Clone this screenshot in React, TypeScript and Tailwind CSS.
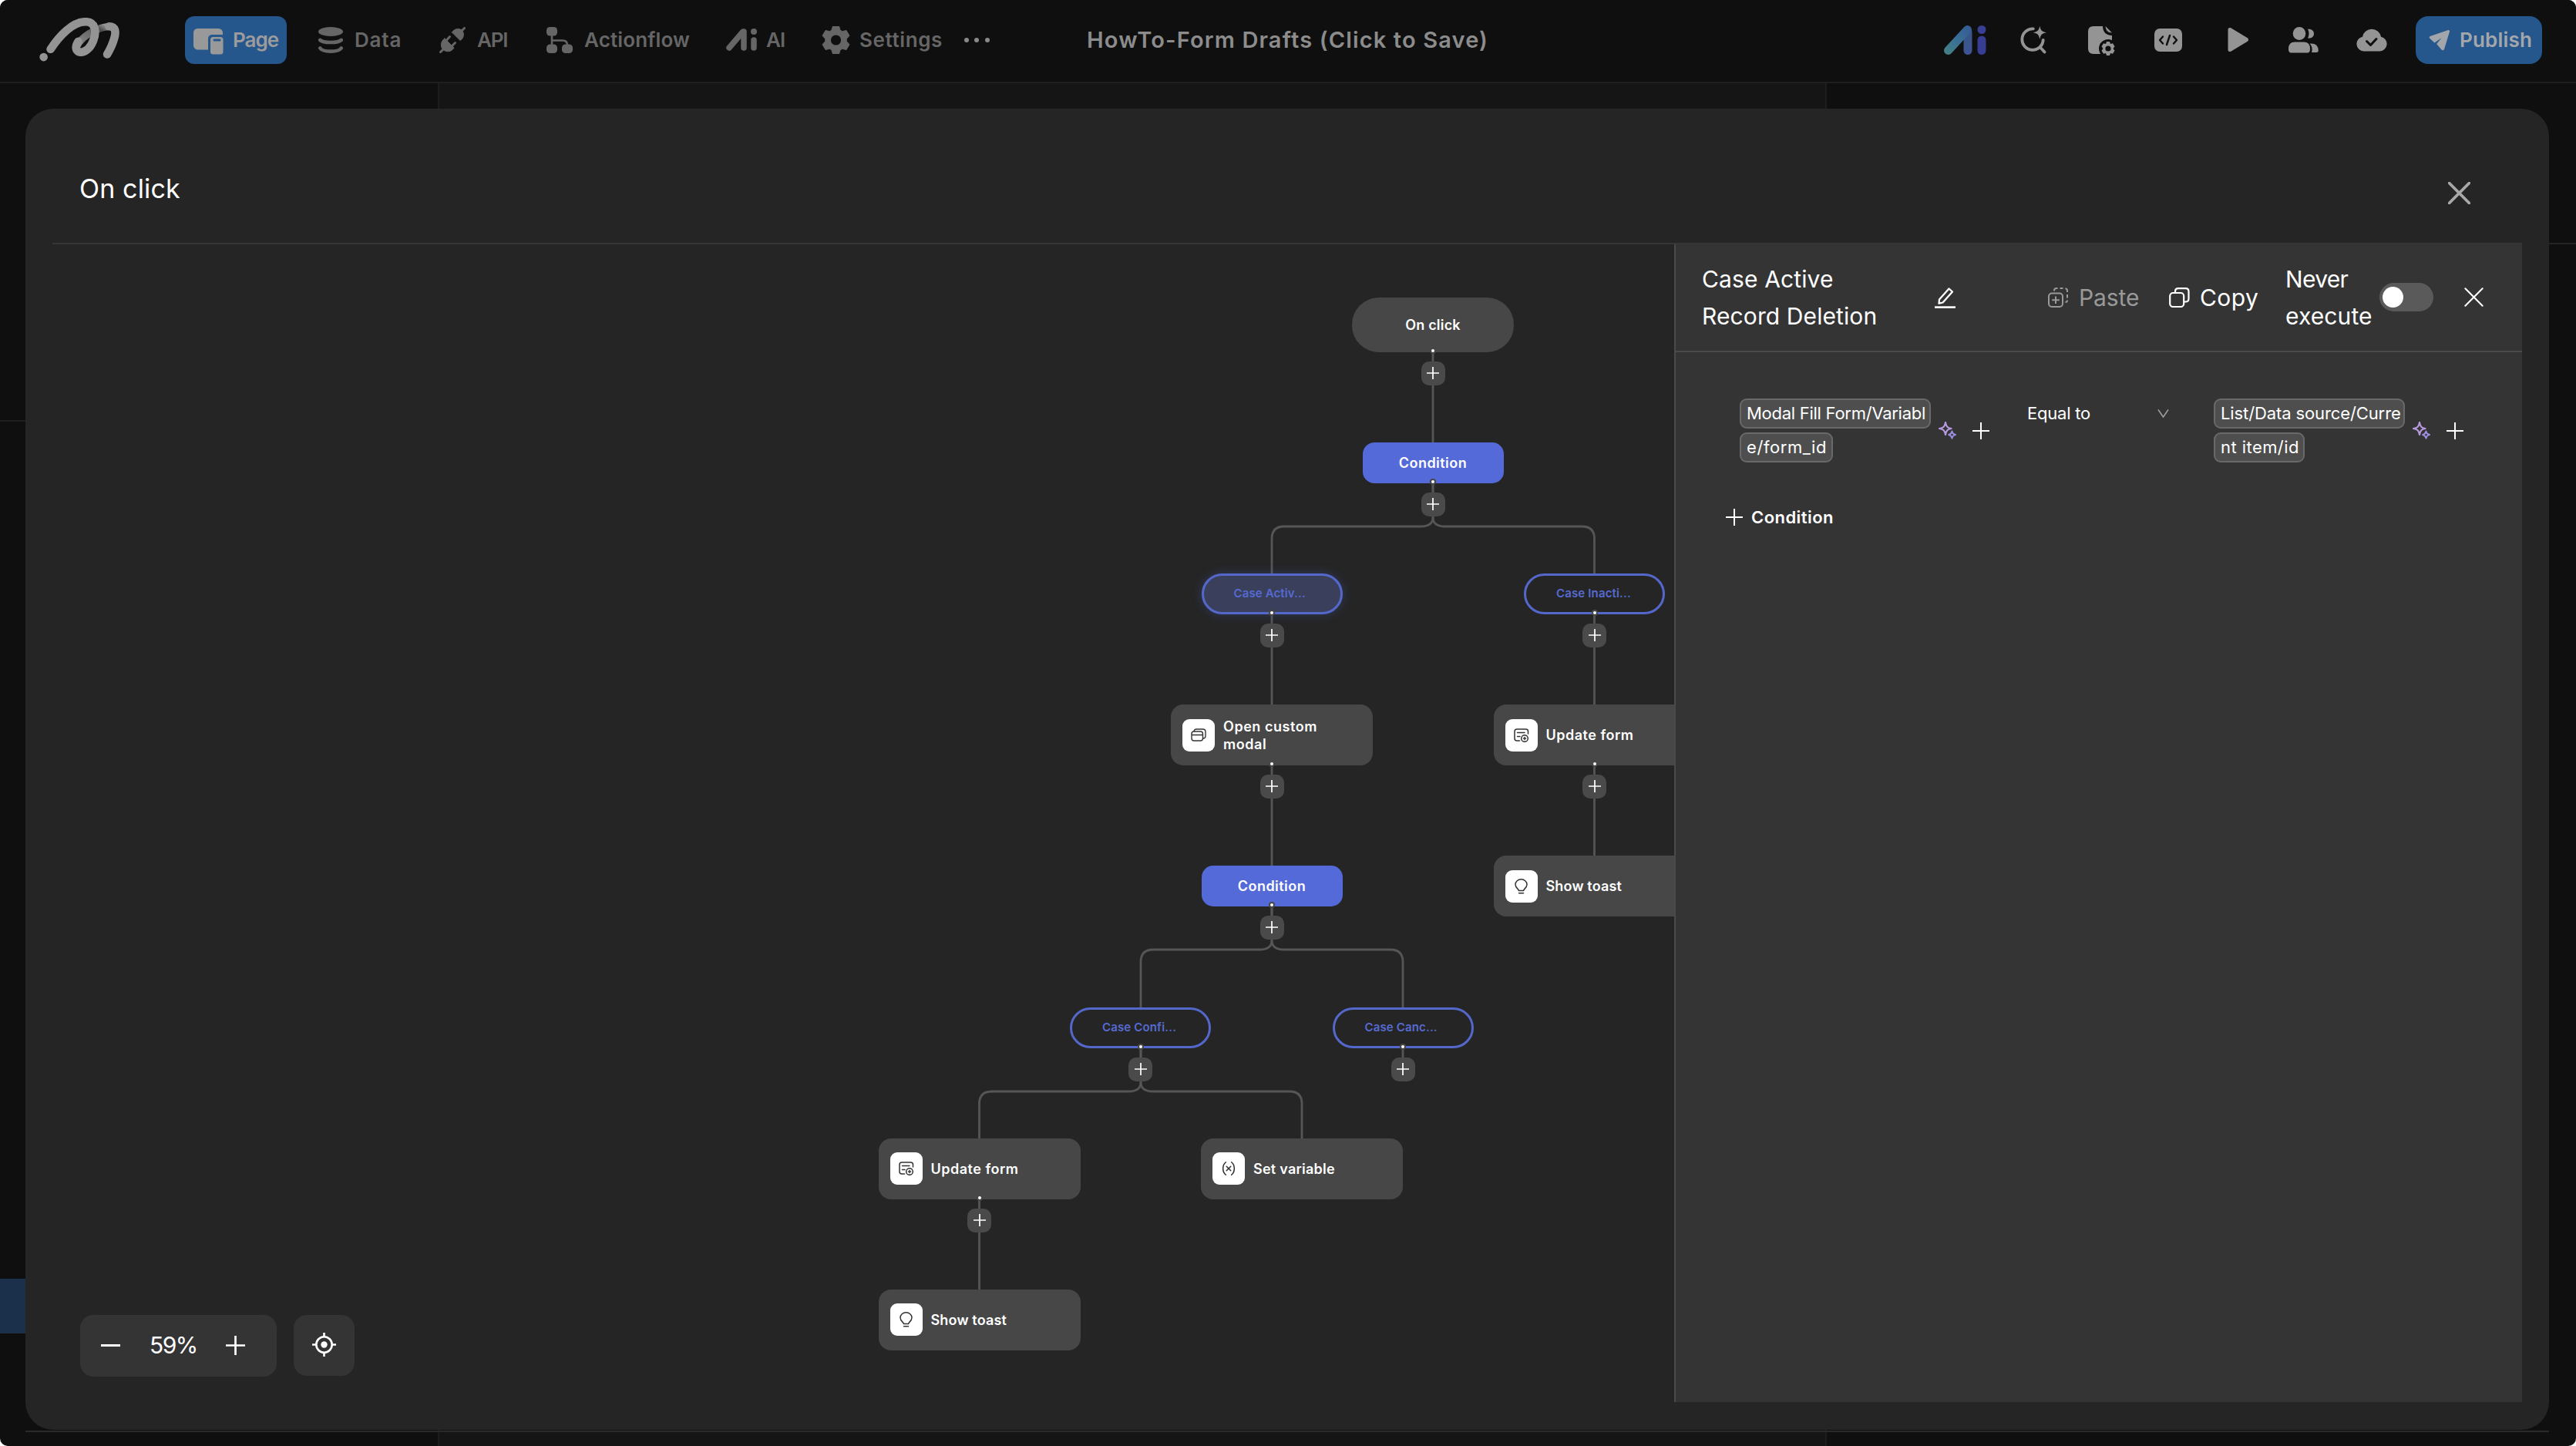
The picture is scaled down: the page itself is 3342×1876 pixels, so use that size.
import type { ReactNode } from "react";
import { Variable } from "lucide-react";
import clsx from "clsx";

/* ---------- icons ---------- */

function Logo() {
  return (
    <svg viewBox="34 42 316 170" className="w-[105px] h-[57px]" fill="none" stroke="#949494" strokeLinecap="round" strokeLinejoin="round">
      <defs>
        <linearGradient id="fold" x1="0" x2="1" y1="1" y2="0">
          <stop offset="0" stopColor="#8a8a8a" />
          <stop offset="0.55" stopColor="#6a6a6a" />
          <stop offset="0.8" stopColor="#4c4c4c" />
          <stop offset="1" stopColor="#949494" />
        </linearGradient>
      </defs>
      <path d="M182 150 C198 118 250 82 300 76" stroke="url(#fold)" strokeWidth="28" />
      <path d="M78 164 C112 112 164 56 216 57 C254 58 258 96 245 130 C232 164 208 180 190 175 C172 168 176 150 186 134" strokeWidth="32" />
      <path d="M306 75 C332 75 334 96 327 120 C321 142 312 162 299 184" strokeWidth="32" />
      <circle cx="51" cy="195" r="16" fill="#949494" stroke="none" />
    </svg>
  );
}

function PageIcon() {
  return (
    <svg viewBox="0 0 39 34" className="w-[39px] h-[34px]">
      <rect width="38" height="27.5" rx="5.5" fill="#999" />
      <rect x="19" y="8" width="22" height="28" rx="5" fill="#25568c" />
      <rect x="22" y="11" width="16.5" height="22.5" rx="3.5" fill="#999" />
      <path d="M27 15h7" stroke="#25568c" strokeWidth="3" strokeLinecap="round" />
    </svg>
  );
}

function DataIcon() {
  return (
    <svg viewBox="0 0 32 34" className="w-[32px] h-[34px]" fill="none" stroke="#666" strokeWidth="4.6" strokeLinecap="round">
      <ellipse cx="16" cy="6" rx="16" ry="6" fill="#666" stroke="none" />
      <path d="M2.3 17c4 4 23.4 4 27.4 0M2.3 27.5c4 5.500 23.4 5.500 27.4 0" />
    </svg>
  );
}

function ApiIcon() {
  return (
    <svg viewBox="0 0 34 34" className="w-[34px] h-[34px]" fill="#666" stroke="#666" strokeLinecap="round">
      <path d="M1.5 32.5 6 28M28 6l4.5-4.5" strokeWidth="3" />
      <path d="M7 15 19 27c-3 5.5-10 6-14 2.5C1 26 1.5 18 7 15Z" strokeWidth="1" />
      <path d="M16.5 7 27 17.5c5-3 5.5-9.5 2.5-13C26 1 19 2 16.5 7Z" strokeWidth="1" />
      <path d="m9.5 17 4-4.5M16.5 24.5l4-4" strokeWidth="3" />
    </svg>
  );
}

function ActionflowIcon() {
  return (
    <svg viewBox="0 0 34 34" className="w-[34px] h-[34px]" fill="#666">
      <path d="M7 8v18M7 17.5h14q6 0 6 6V26" fill="none" stroke="#666" strokeWidth="2.6" />
      <rect width="14" height="11.5" rx="4.5" />
      <rect y="22.5" width="14" height="11.5" rx="4.5" />
      <rect x="20" y="22.5" width="14" height="11.5" rx="4.5" />
    </svg>
  );
}

function AiIcon() {
  return (
    <svg viewBox="0 0 40 29" className="w-[40px] h-[29px]" fill="none" stroke="#666" strokeLinecap="round">
      <path d="M4 25 21.5 4.5" strokeWidth="7.5" />
      <path d="M23 4v21M36 15v10" strokeWidth="7.5" />
      <circle cx="36" cy="4" r="4" fill="#666" stroke="none" />
    </svg>
  );
}

function AiColorIcon() {
  return (
    <svg viewBox="0 0 56 38" className="w-[56px] h-[38px]" fill="none" strokeLinecap="round">
      <defs>
        <linearGradient id="ai-slant" gradientUnits="userSpaceOnUse" x1="3" y1="34" x2="36" y2="4">
          <stop offset="0" stopColor="#437f84" />
          <stop offset="0.45" stopColor="#3a7096" />
          <stop offset="1" stopColor="#345b94" />
        </linearGradient>
        <linearGradient id="ai-stem" gradientUnits="userSpaceOnUse" x1="26" y1="20" x2="37" y2="34">
          <stop offset="0" stopColor="#385688" />
          <stop offset="1" stopColor="#3f5296" />
        </linearGradient>
      </defs>
      <path d="M31 9v23.500" stroke="url(#ai-stem)" strokeWidth="11" />
      <path d="M5.5 32.500 30.500 5.500" stroke="url(#ai-slant)" strokeWidth="11" />
      <path d="M49 19v13.500" stroke="#363d92" strokeWidth="11" />
      <circle cx="49" cy="5.5" r="5.5" fill="#394094" />
    </svg>
  );
}

function GearIcon() {
  return (
    <svg viewBox="0 0 37 36" className="w-[37px] h-[36px]">
      <path
        d="M14.5 0h8l1.600 5.200 2.600 1.500 5.300-1.200 4 6.800-3.700 4.100v3.200l3.700 4.100-4 6.800-5.300-1.200-2.600 1.500L22.500 36h-8l-1.600-5.200-2.600-1.500L5 30.500l-4-6.800 3.700-4.100v-3.200L1 12.300l4-6.800 5.300 1.200 2.600-1.500Z"
        fill="#666"
        stroke="#666"
        strokeWidth="1"
        strokeLinejoin="round"
      />
      <circle cx="18.5" cy="18" r="6.6" fill="#0f0f0f" />
    </svg>
  );
}

function SearchAiIcon() {
  return (
    <svg viewBox="0 0 34 36" className="w-[34px] h-[36px]" fill="none" stroke="#949494" strokeWidth="3.8" strokeLinecap="round">
      <path d="M16.8 3.4A13.700 13.700 0 1 0 29.700 18M26 27.500l5.500 6" />
      <path d="M25.300-.5c1.200 6 2.500 7.300 8.700 8.700-6.200 1.400-7.500 2.700-8.700 8.700-1.200-6-2.500-7.300-8.700-8.700 6.200-1.400 7.500-2.700 8.700-8.700Z" fill="#949494" stroke="none" />
    </svg>
  );
}

function FileGearIcon() {
  return (
    <svg viewBox="0 0 35 38" className="w-[35px] h-[38px]">
      <path d="M7 0h12c0 7 4 12 12 12v24H7q-7 0-7-7V7q0-7 7-7Z" fill="#949494" />
      <path d="M22.5 0c.5 5 3 8.500 8.500 8.500Z" fill="#949494" />
      <circle cx="26" cy="29" r="12" fill="#0f0f0f" />
      <path d="M24 20h4l1 3 3-.7 2.500 4-2 2.700 2 2.700-2.500 4-3-.7-1 3h-4l-1-3-3 .7-2.500-4 2-2.700-2-2.700 2.500-4 3 .7Z" fill="#949494" />
      <circle cx="26" cy="29" r="3.6" fill="#0f0f0f" />
    </svg>
  );
}

function CodeIcon() {
  return (
    <svg viewBox="0 0 36 30" className="w-[36px] h-[30px]" fill="none" stroke="#0f0f0f" strokeWidth="2.4" strokeLinecap="round" strokeLinejoin="round">
      <rect width="36" height="30" rx="7" fill="#949494" stroke="none" />
      <path d="m11 10.5-4 4.5 4 4.5M25 10.5l4 4.5-4 4.5M20 9l-4 12" />
    </svg>
  );
}

function PlayIcon() {
  return (
    <svg viewBox="0 0 28 31" className="w-[28px] h-[31px]">
      <path d="M4 2.5v26L25.5 15.5Z" fill="#949494" stroke="#949494" strokeWidth="5" strokeLinejoin="round" />
    </svg>
  );
}

function UsersIcon() {
  return (
    <svg viewBox="0 0 39 34" className="w-[39px] h-[34px]" fill="#949494">
      <ellipse cx="14" cy="8.5" rx="8.3" ry="8.5" />
      <path d="M25 2.8c5-.5 8 2.200 8 5.900s-3 6.300-8 5.800c2-3.500 2-8.200 0-11.700Z" />
      <path d="M8 19.5h12q8 0 8 9 0 5-3.5 5H3.5Q0 33.5 0 28.5q0-9 8-9Z" />
      <path d="M27.5 21.5q11-1 11.3 9 0 2.5-3 2.5H30c1.500-4 .5-8.500-2.500-11.500Z" />
    </svg>
  );
}

function CloudIcon() {
  return (
    <svg viewBox="0 0 40 31" className="w-[40px] h-[31px]">
      <path d="M9.5 30.5h21a9.500 9.500 0 0 0 1.500-18.800A12.200 12.200 0 0 0 8 11.700 9.500 9.500 0 0 0 9.500 30.500Z" fill="#949494" />
      <path d="m13.5 17.5 5 5 7.5-8" fill="none" stroke="#0f0f0f" strokeWidth="3" strokeLinecap="round" strokeLinejoin="round" />
    </svg>
  );
}

function PlaneIcon() {
  return (
    <svg viewBox="0 0 28 28" className="w-[28px] h-[28px]">
      <path d="M25.5 1.5 2 9.5q-1.5 1 0 2l5.5 5.3L20 8l-9 11 6 7q1.5 1.500 2.500-.5L26.500 2.500Z" fill="#a3a7ab" stroke="#a3a7ab" strokeWidth="1.2" strokeLinejoin="round" />
    </svg>
  );
}

function CrossIcon({ className, width }: { className: string; width: number }) {
  return (
    <svg viewBox="0 0 28 28" className={className} stroke="currentColor" strokeWidth={width} strokeLinecap="round">
      <path d="m1.5 1.5 25 25m0-25-25 25" />
    </svg>
  );
}

function PlusIcon({ className, width }: { className: string; width: number }) {
  return (
    <svg viewBox="0 0 24 24" className={className} stroke="currentColor" strokeWidth={width}>
      <path d="M12 0v24M0 12h24" />
    </svg>
  );
}

function PencilIcon() {
  return (
    <svg viewBox="0 0 27 28" className="w-[27px] h-[28px]" fill="none" stroke="#fff" strokeWidth="2.3" strokeLinejoin="round">
      <path d="M6 16.5 18.5 2.5l4.5 4L10.5 20.5l-5 1.200Z" />
      <path d="M0 26.6h27" strokeWidth="2.6" />
    </svg>
  );
}

function PasteIcon() {
  return (
    <svg viewBox="0 0 26 26" className="w-[26px] h-[26px]" fill="none" stroke="#999" strokeWidth="2">
      <rect x="1" y="7.5" width="18" height="17.5" rx="4" />
      <path d="M10 11.5v9.5M5.2 16.2h9.600" />
      <path d="M8 4.5V4q0-3 3-3h1.500M15.500 1h4M22.500 1.200Q25 1.500 25 4v2M25 9v4.500M25 16.500q0 2.500-2.500 2.500" />
    </svg>
  );
}

function CopyIcon() {
  return (
    <svg viewBox="0 0 27 26" className="w-[27px] h-[26px]" fill="none" stroke="#fff" strokeWidth="2.2">
      <rect x="1.2" y="7" width="18" height="18" rx="4" />
      <path d="M8 7V5.200q0-4 4-4h9.500q4 0 4 4v9.300q0 4-4 4h-2.300" />
    </svg>
  );
}

function SparkleIcon() {
  return (
    <svg viewBox="0 0 23 23" className="w-[23px] h-[23px]" fill="none" strokeWidth="2.1" strokeLinejoin="round">
      <path d="M9 1c1 5.500 2.500 7 7.500 8-5 1-6.500 2.500-7.500 8-1-5.500-2.500-7-8-8 5.500-1 7-2.500 8-8Z" stroke="#b79be0" />
      <path d="M17.500 12.500c.6 3 1.400 3.700 4.500 4.500-3.100.8-3.900 1.600-4.500 4.600-.6-3-1.400-3.800-4.300-4.600 2.900-.8 3.700-1.500 4.300-4.500Z" stroke="#9a8fe0" />
    </svg>
  );
}

function ModalGlyph() {
  return (
    <svg viewBox="0 0 20 17" className="w-[20px] h-[17px]" fill="none" stroke="#333" strokeWidth="1.4">
      <rect x="1" y="4" width="14.5" height="12" rx="3" />
      <path d="M1 8.5h14.5M4 4Q4.300 1 7 1h8.500Q19 1 19 4.500v5.500q0 2.800-3.500 3" />
    </svg>
  );
}

function FormGlyph() {
  return (
    <svg viewBox="0 0 20 18" className="w-[20px] h-[18px]" fill="none" stroke="#333" strokeWidth="1.5" strokeLinecap="round">
      <path d="M7.5 16H4q-3 0-3-3V4q0-3 3-3h11.500q3 0 3 3v3M4.500 5.500H14M4.500 10.500h3.500" />
      <circle cx="14" cy="13" r="4.3" />
      <path d="M14 11.5v3M12.5 13h3" />
    </svg>
  );
}

function BulbGlyph() {
  return (
    <svg viewBox="0 0 17 20" className="w-[17px] h-[20px]" fill="none" stroke="#333" strokeWidth="1.5" strokeLinecap="round">
      <path d="M5.5 15.5c0-2-4.500-3.500-4.500-8a7.500 6.700 0 0 1 15 0c0 4.500-4.500 6-4.500 8ZM5.500 18.800h6" />
    </svg>
  );
}

const glyphs: Record<string, ReactNode> = {
  modal: <ModalGlyph />,
  form: <FormGlyph />,
  bulb: <BulbGlyph />,
  variable: <Variable size={22} color="#333" strokeWidth={1.7} />,
};

/* ---------- header ---------- */

const navItems = [
  { label: "Data", icon: <DataIcon />, item: "w-[157px] gap-[15px]", text: "tracking-[0.83px]" },
  { label: "API", icon: <ApiIcon />, item: "w-[139px] gap-[15px]", text: "tracking-[-1.2px]" },
  { label: "Actionflow", icon: <ActionflowIcon />, item: "w-[233px] gap-[15px]", text: "tracking-[0.14px]" },
  { label: "AI", icon: <AiIcon />, item: "w-[124px] gap-[12px]", text: "tracking-[-1px]" },
  { label: "Settings", icon: <GearIcon />, item: "w-[184px] gap-[12px]", text: "tracking-[0.6px]" },
];

const toolbar = [
  { name: "ai", icon: <AiColorIcon />, cell: "w-[99px]" },
  { name: "search", icon: <SearchAiIcon />, cell: "w-[88px]" },
  { name: "file", icon: <FileGearIcon />, cell: "w-[86px] pt-[2px]" },
  { name: "code", icon: <CodeIcon />, cell: "w-[94px]" },
  { name: "play", icon: <PlayIcon />, cell: "w-[80px]" },
  { name: "users", icon: <UsersIcon />, cell: "w-[88px]" },
  { name: "cloud", icon: <CloudIcon />, cell: "w-[77px]" },
];

function Header() {
  return (
    <header className="flex h-[108px] shrink-0 items-center border-b-2 border-[#1e1e1e] bg-[#0f0f0f] pb-[3px] pl-[51px] pr-[44px] text-[26px] font-semibold text-[#666]">
      <Logo />
      <button className="ml-[84px] flex h-[62px] w-[132px] items-center rounded-[12px] bg-[#25568c] pl-[11px] text-[#9c9c9c]">
        <span className="mt-[4px]">
          <PageIcon />
        </span>
        <span className="ml-[12px] tracking-[-1px]">Page</span>
      </button>
      <nav className="ml-[41px] flex">
        {navItems.map((n) => (
          <div key={n.label} className={clsx("flex items-center", n.item)}>
            {n.icon}
            <span className={n.text}>{n.label}</span>
          </div>
        ))}
        <div className="flex w-[34px] items-center justify-between px-[0.5px]">
          <i className="size-[6px] rounded-full bg-[#8a8a8a]" />
          <i className="size-[6px] rounded-full bg-[#8a8a8a]" />
          <i className="size-[6px] rounded-full bg-[#8a8a8a]" />
        </div>
      </nav>
      <h1 className="ml-[126px] whitespace-nowrap text-[29px] tracking-[1.15px] text-[#8c8c8c]">HowTo-Form Drafts (Click to Save)</h1>
      <div className="ml-auto flex items-center">
        {toolbar.map((t) => (
          <div key={t.name} className={t.cell}>
            {t.icon}
          </div>
        ))}
        <button className="flex h-[62px] w-[164px] items-center rounded-[16px] bg-[#25568c] pl-[17px] text-[#a3a7ab]">
          <PlaneIcon />
          <span className="ml-[12px] tracking-[0.2px]">Publish</span>
        </button>
      </div>
    </header>
  );
}

/* ---------- flow canvas ---------- */

// x is the horizontal centre of a node, y its top edge
const nodes = [
  { kind: "start", label: "On click", x: 1791, y: 68.5 },
  { kind: "condition", label: "Condition", x: 1791, y: 257 },
  { kind: "selected", label: "Case Activ...", x: 1582, y: 427 },
  { kind: "case", label: "Case Inacti...", x: 2000.5, y: 427 },
  { kind: "card", label: "Open custom modal", icon: "modal", x: 1582, y: 597 },
  { kind: "card", label: "Update form", icon: "form", x: 2000.5, y: 597 },
  { kind: "card", label: "Show toast", icon: "bulb", x: 2000.5, y: 793, last: true },
  { kind: "condition", label: "Condition", x: 1582, y: 806 },
  { kind: "case", label: "Case Confi...", x: 1411.5, y: 990 },
  { kind: "case", label: "Case Canc...", x: 1752, y: 990 },
  { kind: "card", label: "Update form", icon: "form", x: 1202.5, y: 1159.5 },
  { kind: "card", label: "Set variable", icon: "variable", x: 1621, y: 1159.5, last: true },
  { kind: "card", label: "Show toast", icon: "bulb", x: 1202.5, y: 1355.5, last: true },
];

const labelTracking: Record<string, string> = {
  "Open custom modal": "tracking-[0.55px]",
  "Update form": "tracking-[0.5px]",
  "Show toast": "tracking-[0.16px]",
  "Set variable": "tracking-[0.25px]",
};

const shapes: Record<string, { box: string; w: number; h: number }> = {
  start: { box: "justify-center rounded-[35px] bg-[#474747] text-[18px] tracking-[0.18px] text-white", w: 210, h: 71 },
  condition: { box: "justify-center rounded-[15px] bg-[#546ad8] text-[18px] tracking-[0.47px] text-white", w: 183, h: 53 },
  case: { box: "rounded-full border-3 border-[#5468cc] pl-[39px] text-[15px] tracking-[0.15px] text-[#566bd2]", w: 183, h: 53 },
  selected: {
    box: "rounded-full border-3 border-[#5468cc] bg-[#3a3f5c] pl-[39px] text-[15px] tracking-[0.12px] text-[#566bd2] shadow-[0_0_14px_rgba(84,106,216,0.3)]",
    w: 183,
    h: 53,
  },
  card: { box: "gap-[11px] rounded-[16px] bg-[#474747] pl-[15px] text-[18px] leading-[23px] text-white", w: 262, h: 79 },
};

const edges = [
  "M1791 139V257",
  "M1791 309V354Q1791 366 1775 366H1598Q1582 366 1582 382V427",
  "M1791 309V354Q1791 366 1807 366H1984.5Q2000.5 366 2000.5 382V427",
  "M1582 479V597",
  "M2000.5 479V597",
  "M1582 675V806",
  "M2000.5 675V793",
  "M1582 858V903Q1582 915 1566 915H1428Q1412 915 1412 931V990",
  "M1582 858V903Q1582 915 1598 915H1736Q1752 915 1752 931V990",
  "M1412 1041V1087Q1412 1099 1396 1099H1218.5Q1202.5 1099 1202.5 1115V1160",
  "M1412 1041V1087Q1412 1099 1428 1099H1605Q1621 1099 1621 1115V1160",
  "M1752 1041V1070",
  "M1202.5 1237V1356",
];

function FlowNode({ node }: { node: (typeof nodes)[number] }) {
  const { box, w, h } = shapes[node.kind];
  return (
    <div className={clsx("absolute flex items-center font-semibold", box)} style={{ left: node.x - w / 2, top: node.y, width: w, height: h }}>
      {node.icon && <span className="flex size-[42px] shrink-0 items-center justify-center rounded-[9px] bg-white">{glyphs[node.icon]}</span>}
      <span className={clsx(node.icon && "w-[140px]", labelTracking[node.label])}>{node.label}</span>
    </div>
  );
}

function AddButton({ x, y }: { x: number; y: number }) {
  return (
    <>
      <i className="absolute size-[8px] rounded-full border-2 border-[#474747] bg-white" style={{ left: x - 4, top: y - 6 }} />
      <button className="absolute flex size-[31px] items-center justify-center rounded-[10px] bg-[#4a4a4a] pb-[1px] text-white" style={{ left: x - 15.5, top: y + 12 }}>
        <PlusIcon className="size-[16px]" width={2.6} />
      </button>
    </>
  );
}

function Canvas() {
  return (
    <div className="relative flex-1 overflow-hidden">
      <svg className="absolute inset-0 size-full" fill="none" stroke="#565656" strokeWidth="2.8">
        {edges.map((d) => (
          <path key={d} d={d} />
        ))}
      </svg>
      {nodes.map((n) => (
        <FlowNode key={`${n.x}-${n.y}`} node={n} />
      ))}
      {nodes
        .filter((n) => !n.last)
        .map((n) => (
          <AddButton key={`${n.x}-${n.y}`} x={n.x} y={n.y + shapes[n.kind].h} />
        ))}
      <div className="absolute left-[36px] top-[1389px] flex gap-[22px] text-white">
        <div className="flex h-[80px] w-[255px] items-center rounded-[17px] bg-[#343434] pb-[2px] pl-[27px]">
          <i className="h-[3px] w-[25px] bg-white" />
          <span className="ml-[38px] w-[99px] text-[30px] tracking-[-1.5px]">59%</span>
          <PlusIcon className="size-[25px]" width={2.6} />
        </div>
        <div className="flex size-[79px] items-center justify-center rounded-[17px] bg-[#343434] pb-[2px]">
          <svg viewBox="0 0 31 31" className="size-[31px]" fill="none" stroke="#fff" strokeWidth="2.6">
            <circle cx="15.5" cy="15.5" r="10.2" />
            <circle cx="15.5" cy="15.5" r="4.2" fill="#fff" stroke="none" />
            <path d="M15.5 0v5M15.5 26v5M0 15.5h5M26 15.5h5" />
          </svg>
        </div>
      </div>
    </div>
  );
}

/* ---------- side panel ---------- */

function Operand({ first, second, className, tracking }: { first: string; second: string; className: string; tracking: string }) {
  return (
    <div className="flex items-center">
      <div className="flex w-[248px] flex-col items-start gap-[5px]">
        <span className={clsx("flex h-[39px] w-full items-center whitespace-nowrap rounded-[9px] border-2 border-[#696969] bg-[#4e4e4e] pl-[7px]", tracking)}>{first}</span>
        <span className={clsx("flex h-[39px] items-center whitespace-nowrap rounded-[9px] border-2 border-[#696969] bg-[#4e4e4e] pl-[7px]", className)}>{second}</span>
      </div>
      <span className="ml-[10px]">
        <SparkleIcon />
      </span>
      <PlusIcon className="ml-[21px] size-[22px]" width={2.2} />
    </div>
  );
}

function SidePanel() {
  return (
    <aside className="w-[1100px] border-l-2 border-[#4a4a4a] bg-[#343434] text-white">
      <div className="flex h-[140px] items-center border-b-2 border-[#4a4a4a] pb-[1px] pl-[34px] text-[30px] leading-[48px]">
        <div className="w-[302px]">
          <div className="tracking-[0.13px]">Case Active</div>
          <div className="tracking-[0.1px]">Record Deletion</div>
        </div>
        <PencilIcon />
        <div className="ml-[120px] flex w-[157px] items-center gap-[14px] text-[#999]">
          <PasteIcon />
          <span className="tracking-[-0.09px]">Paste</span>
        </div>
        <div className="flex w-[151px] items-center gap-[13px]">
          <CopyIcon />
          <span className="tracking-[0.44px]">Copy</span>
        </div>
        <div className="w-[122px]">
          <div className="tracking-[-0.69px]">Never</div>
          <div className="tracking-[0.1px]">execute</div>
        </div>
        <div className="flex h-[37px] w-[70px] items-center rounded-full bg-[#5a5a5a] pl-[4px]">
          <i className="size-[27px] rounded-full bg-white" />
        </div>
        <CrossIcon className="ml-[40px] size-[25px]" width={2.3} />
      </div>

      <div className="flex items-start pl-[83px] pt-[60px] text-[22px]">
        <Operand first="Modal Fill Form/Variabl" second="e/form_id" className="w-[121px] tracking-[0.57px]" tracking="tracking-[-0.27px]" />
        <div className="ml-[49px] flex h-[39px] items-center">
          <span className="w-[169px] tracking-[-0.22px]">Equal to</span>
          <svg viewBox="0 0 15 11" className="h-[11px] w-[15px]" fill="none" stroke="#999" strokeWidth="1.7">
            <path d="m1 .5 6.500 9.500L14 .5" />
          </svg>
        </div>
        <div className="ml-[58px]">
          <Operand first="List/Data source/Curre" second="nt item/id" className="w-[118px] tracking-[0.44px]" tracking="tracking-[-0.11px]" />
        </div>
      </div>

      <button className="ml-[65px] mt-[60px] flex h-[22px] items-center gap-[11px] text-[22px] font-semibold tracking-[0.45px]">
        <PlusIcon className="size-[22px]" width={2.2} />
        Condition
      </button>
    </aside>
  );
}

function Modal() {
  return (
    <section className="absolute left-[33px] top-[141px] flex h-[1714px] w-[3274px] flex-col rounded-[36px] bg-[#252525] px-[35px]">
      <div className="flex h-[176px] shrink-0 items-start justify-between border-b-2 border-[#363636] pl-[35px] pr-[67px] pt-[84px]">
        <h2 className="text-[34px] leading-[40px] tracking-[0.15px] text-white">On click</h2>
        <CrossIcon className="mt-[11px] size-[29px] text-[#a8a8a8]" width={3.6} />
      </div>
      <div className="flex h-[1502px]">
        <Canvas />
        <SidePanel />
      </div>
    </section>
  );
}

export default function App() {
  return (
    <div className="h-[1876px] w-[3342px] bg-white font-['Inter',sans-serif]">
      <div className="relative flex h-full flex-col overflow-hidden rounded-[10px] bg-[#0f0f0f]">
        <Header />
        <div className="flex flex-1">
          <div className="w-[570px] border-r-2 border-[#1d1d1d]">
            <div className="h-[439px] border-b-2 border-[#1e1e1e]" />
            <div className="mt-[1112px] h-[71px] bg-[#1b304b]" />
          </div>
          <div className="flex-1 bg-[#151515]" />
          <div className="w-[974px] border-l-2 border-[#1d1d1d]">
            <div className="h-[209px] border-b-2 border-[#242424]" />
          </div>
        </div>
        <div className="absolute bottom-0 left-[33px] right-[35px] h-[20px] border-t-2 border-[#2a2a2a]" />
        <Modal />
      </div>
    </div>
  );
}
